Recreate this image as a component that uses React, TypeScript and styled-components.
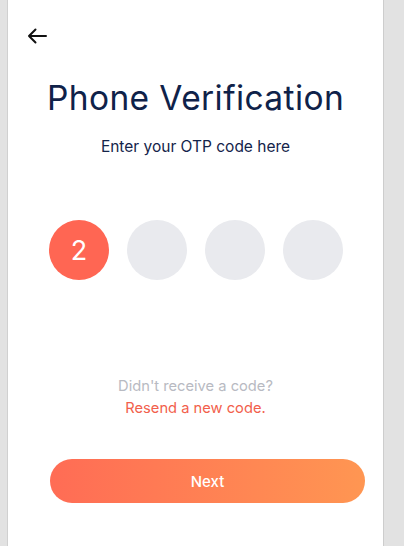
import React from "react";
import styled, { createGlobalStyle } from "styled-components";

const Global = createGlobalStyle`
  html, body { margin: 0; padding: 0; background: #e2e2e2; }
  body { font-family: Inter, "Noto Sans", sans-serif; }
`;

const Page = styled.div`
  display: flex;
  padding-left: 7px;
  min-height: 546px;
`;

const Card = styled.div`
  width: 375px;
  min-height: 546px;
  background: #ffffff;
  border-left: 1px solid #d0d0d0;
  border-right: 1px solid #cdcdcd;
  display: flex;
  flex-direction: column;
  box-sizing: content-box;
`;

const TopBar = styled.div`
  height: 70px;
  display: flex;
  align-items: flex-start;
  padding: 25px 0 0 18px;
  box-sizing: border-box;
`;

const BackButton = styled.button`
  border: none;
  background: none;
  padding: 0;
  width: 22px;
  height: 22px;
  display: flex;
  align-items: center;
  justify-content: center;
  cursor: pointer;
`;

const Title = styled.h1`
  margin: 8px 0 0;
  font-size: 33.5px;
  font-weight: 400;
  color: #0f2249;
  text-align: center;
  letter-spacing: 0.4px;
  line-height: 40px;
`;

const Subtitle = styled.p`
  margin: 19px 0 0;
  font-size: 15.5px;
  color: #14244a;
  text-align: center;
  line-height: 20px;
`;

const OtpRow = styled.div`
  display: flex;
  gap: 18px;
  margin: 63px 0 0 41px;
`;

const OtpCircle = styled.div<{ $filled?: boolean }>`
  width: 60px;
  height: 60px;
  border-radius: 50%;
  background: ${(p) => (p.$filled ? "#ff6653" : "#e9eaee")};
  color: #ffffff;
  font-size: 27px;
  display: flex;
  align-items: center;
  justify-content: center;
`;

const Prompt = styled.div`
  margin-top: 95px;
  text-align: center;
  font-size: 14.7px;
  line-height: 22px;
`;

const Muted = styled.div`
  color: #b8bac2;
`;

const Resend = styled.div`
  color: #f2604c;
`;

const NextButton = styled.button`
  margin: 40px 0 0 42px;
  width: 315px;
  height: 44px;
  border: none;
  border-radius: 22px;
  background: linear-gradient(90deg, #ff6c55 0%, #ff9652 100%);
  color: #ffffff;
  font-family: Inter, "Noto Sans", sans-serif;
  font-size: 15px;
  font-weight: 500;
  cursor: pointer;
`;

export default function App() {
  return (
    <>
      <Global />
      <Page>
        <Card>
          <TopBar>
            <BackButton aria-label="Back">
              <svg width="20" height="16" viewBox="0 0 20 16" fill="none">
                <path d="M19 8H2M8.5 1.5L2 8l6.5 6.5" stroke="#111" strokeWidth="2" strokeLinecap="round" strokeLinejoin="round" />
              </svg>
            </BackButton>
          </TopBar>
          <Title>Phone Verification</Title>
          <Subtitle>Enter your OTP code here</Subtitle>
          <OtpRow>
            <OtpCircle $filled>2</OtpCircle>
            <OtpCircle />
            <OtpCircle />
            <OtpCircle />
          </OtpRow>
          <Prompt>
            <Muted>Didn't receive a code?</Muted>
            <Resend>Resend a new code.</Resend>
          </Prompt>
          <NextButton>Next</NextButton>
        </Card>
      </Page>
    </>
  );
}
